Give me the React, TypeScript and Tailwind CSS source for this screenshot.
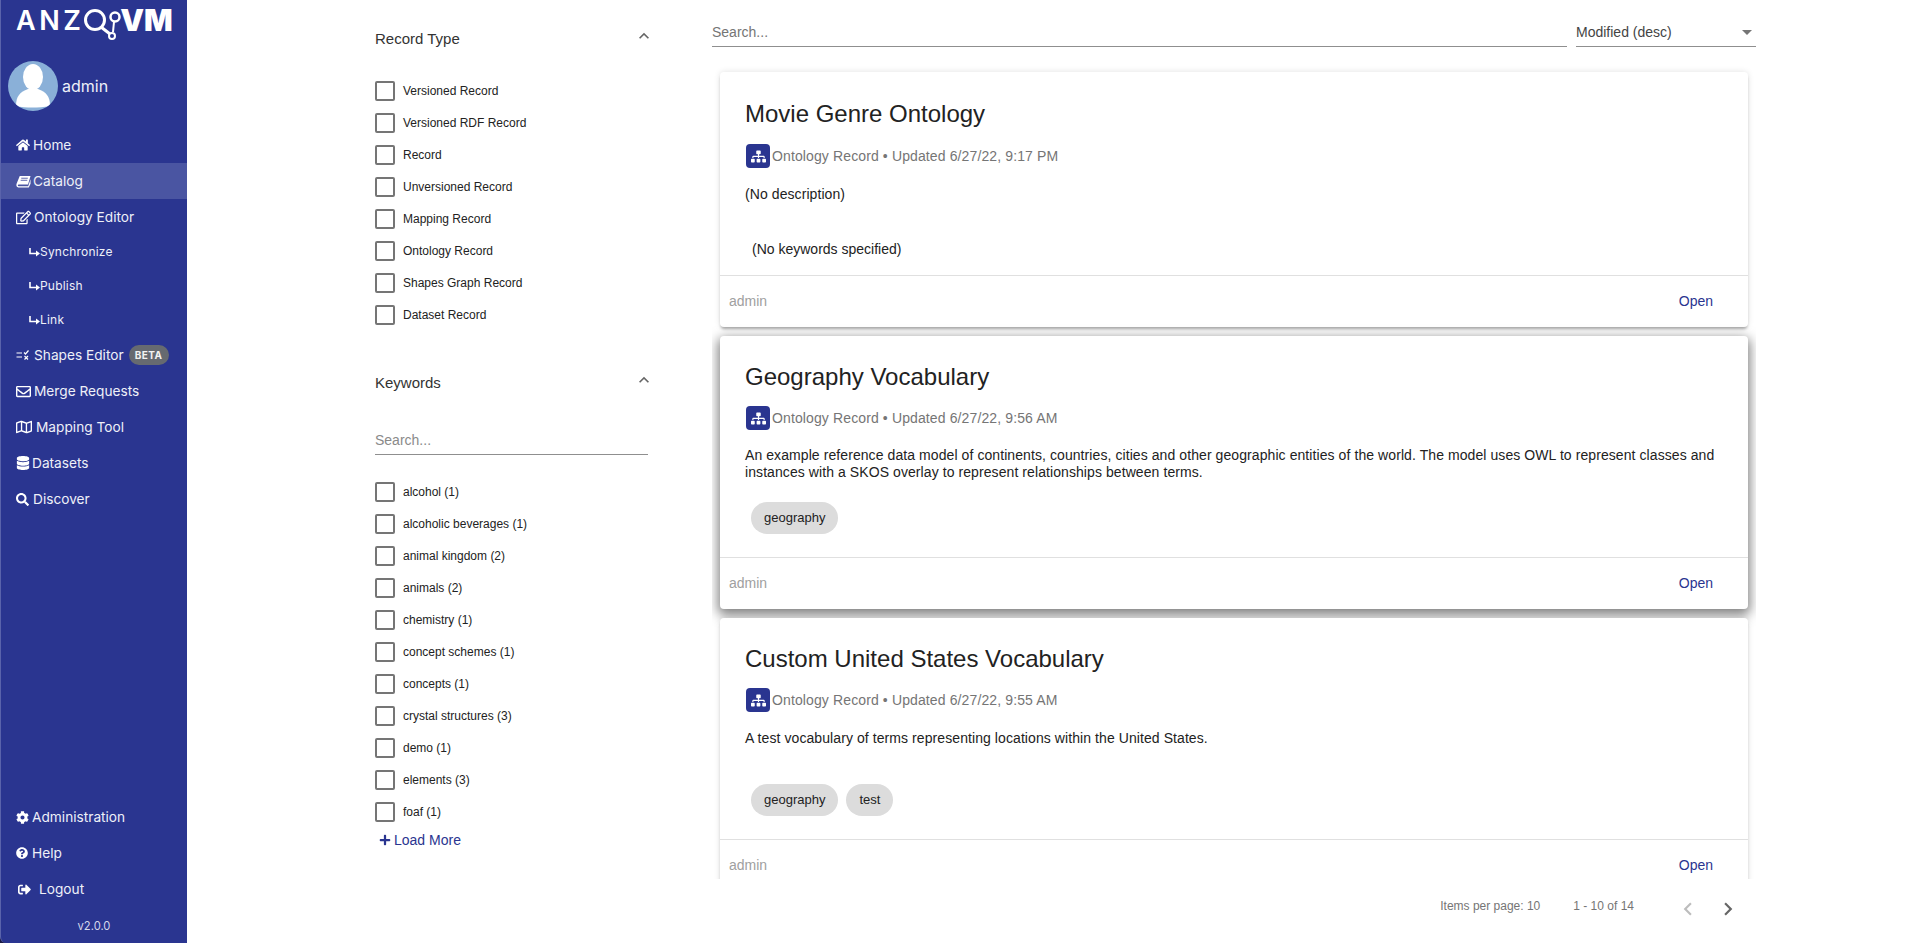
import { ReactNode } from 'react';
import {
  FaCog,
  FaDatabase,
  FaHome,
  FaPlus,
  FaQuestionCircle,
  FaRegEdit,
  FaRegEnvelope,
  FaRegMap,
  FaSearch,
  FaSignOutAlt,
  FaSitemap,
} from 'react-icons/fa';
import { MdChevronLeft, MdChevronRight, MdExpandLess } from 'react-icons/md';

const recordTypes = [
  'Versioned Record',
  'Versioned RDF Record',
  'Record',
  'Unversioned Record',
  'Mapping Record',
  'Ontology Record',
  'Shapes Graph Record',
  'Dataset Record',
];

const keywords = [
  'alcohol (1)',
  'alcoholic beverages (1)',
  'animal kingdom (2)',
  'animals (2)',
  'chemistry (1)',
  'concept schemes (1)',
  'concepts (1)',
  'crystal structures (3)',
  'demo (1)',
  'elements (3)',
  'foaf (1)',
];

function Logo() {
  return (
    <div className="flex h-[40px] items-start pl-[15px] pt-[2px] text-white">
      <span className="mt-[3px] text-[27px] leading-[32px] font-semibold tracking-[3.5px]">ANZ</span>
      <svg width="50" height="34" viewBox="0 0 50 34" className="mt-[4px] -ml-[1px] shrink-0">
        <g fill="none" stroke="white">
          <circle cx="12" cy="14" r="9.5" strokeWidth="3" />
          <path d="M18 21 L27 28" strokeWidth="3" />
          <circle cx="29" cy="30" r="3" strokeWidth="2" />
          <circle cx="32" cy="11" r="4.5" strokeWidth="2.5" />
          <path d="M31 16 L30 26" strokeWidth="2" />
        </g>
      </svg>
      <span className="-ml-[13px] text-[30px] leading-[36px] font-black">VM</span>
    </div>
  );
}

function Avatar() {
  return (
    <svg width="50" height="50" viewBox="0 0 50 50" className="shrink-0">
      <defs>
        <clipPath id="avatar-clip">
          <circle cx="25" cy="25" r="25" />
        </clipPath>
      </defs>
      <circle cx="25" cy="25" r="25" fill="#8ab0d8" />
      <g clipPath="url(#avatar-clip)" fill="white">
        <ellipse cx="25" cy="16" rx="10" ry="13" />
        <path d="M8 45 C8 35 12 31 20 28 L30 28 C38 31 42 35 42 45 C30 47 18 47 8 45 Z" />
      </g>
    </svg>
  );
}

function BookIcon() {
  return (
    <svg width="15" height="13" viewBox="0 0 16 13">
      <path
        d="M4 0.5 H15.5 L12.8 9.6 H3 C1.6 9.6 1.6 11.6 3 11.6 H13 L15.5 4 V9 L13.6 12.8 H2.6 C0.6 12.8 0 11 0.6 9 Z"
        fill="white"
      />
      <path d="M5.6 3 H12.6 M5 5.2 H12" stroke="#2a3590" strokeWidth="0.8" />
    </svg>
  );
}

function SubArrow() {
  return (
    <svg width="11" height="9" viewBox="0 0 11 9" className="shrink-0">
      <path d="M1 0 V5.5 H8" fill="none" stroke="white" strokeWidth="1.6" />
      <path d="M7 2.5 L11 5.5 L7 8.5 Z" fill="white" />
    </svg>
  );
}

function ShapesIcon() {
  return (
    <svg width="13" height="10" viewBox="0 0 13 10" className="shrink-0">
      <path d="M0.5 3 H6 M0.5 7 H6" stroke="white" strokeWidth="1.2" />
      <path d="M8 2.5 L9.5 4 L12.5 0.5 M8.5 6 L12 9.5 M12 6 L8.5 9.5" fill="none" stroke="white" strokeWidth="1.2" />
    </svg>
  );
}

function NavItem({ icon, label, slot, active, children }: {
  icon: ReactNode;
  label: string;
  slot: string;
  active?: boolean;
  children?: ReactNode;
}) {
  return (
    <div className={`flex h-[36px] items-center pl-[15px] ${active ? 'bg-[#4a55a2]' : ''}`}>
      <span className={`flex shrink-0 items-center text-white ${slot}`}>{icon}</span>
      <span className="text-[13.7px] text-[#eef0f8]">{label}</span>
      {children}
    </div>
  );
}

function SubItem({ label }: { label: string }) {
  return (
    <div className="flex h-[34px] items-center pl-[28px]">
      <SubArrow />
      <span className="text-[12px] tracking-[0.2px] text-[#eef0f8]">{label}</span>
    </div>
  );
}

function Sidebar() {
  return (
    <div className="h-full w-[187px] shrink-0 bg-[#1b1a45]">
      <aside className="flex h-full flex-col rounded-bl-[6px] border-l border-[#5a63ab] bg-[#2a3590] font-['Inter',sans-serif]">
        <Logo />
        <div className="mt-[21px] flex items-center gap-[4px] pl-[7px]">
          <Avatar />
          <span className="text-[16px] text-[#eef0f8]">admin</span>
        </div>
        <nav className="mt-[16px] flex flex-col">
          <NavItem icon={<FaHome size={14} />} label="Home" slot="w-[17px]" />
          <NavItem icon={<BookIcon />} label="Catalog" slot="w-[17px]" active />
          <NavItem icon={<FaRegEdit size={15} />} label="Ontology Editor" slot="w-[18px]" />
          <SubItem label="Synchronize" />
          <SubItem label="Publish" />
          <SubItem label="Link" />
          <NavItem icon={<ShapesIcon />} label="Shapes Editor" slot="w-[18px]">
            <span className="ml-[5px] rounded-full bg-[#666a70] px-[6px] py-[3px] text-[10px] leading-[14px] font-bold tracking-[0.5px] text-[#f2f2f2]">
              BETA
            </span>
          </NavItem>
          <NavItem icon={<FaRegEnvelope size={15} />} label="Merge Requests" slot="w-[18px]" />
          <NavItem icon={<FaRegMap size={16} />} label="Mapping Tool" slot="w-[20px]" />
          <NavItem icon={<FaDatabase size={14} />} label="Datasets" slot="w-[16px]" />
          <NavItem icon={<FaSearch size={13} />} label="Discover" slot="w-[17px]" />
        </nav>
        <div className="mt-auto flex flex-col">
          <NavItem icon={<FaCog size={13} />} label="Administration" slot="w-[16px]" />
          <NavItem icon={<FaQuestionCircle size={12} />} label="Help" slot="w-[16px]" />
          <NavItem icon={<FaSignOutAlt size={13} className="ml-[2px]" />} label="Logout" slot="w-[23px]" />
          <div className="flex h-[36px] items-center justify-center pt-[2px] text-[11.2px] text-[#d5d8ec]">v2.0.0</div>
        </div>
      </aside>
    </div>
  );
}

function CheckRow({ label }: { label: string }) {
  return (
    <div className="flex h-[32px] items-center gap-[8px]">
      <span className="h-[20px] w-[20px] shrink-0 rounded-[2px] border-2 border-[#757575]" />
      <span className="text-[12px] text-[#222]">{label}</span>
    </div>
  );
}

function FilterHeader({ title }: { title: string }) {
  return (
    <div className="flex h-[24px] items-center justify-between">
      <span className="text-[15px] text-[#333]">{title}</span>
      <MdExpandLess size={20} className="-mr-[6px] -mt-[6px] text-[#666]" />
    </div>
  );
}

function Filters() {
  return (
    <div className="w-[273px] shrink-0 pt-[27px]">
      <FilterHeader title="Record Type" />
      <div className="mt-[24px] flex flex-col">
        {recordTypes.map((t) => (
          <CheckRow key={t} label={t} />
        ))}
      </div>
      <div className="mt-[40px]">
        <FilterHeader title="Keywords" />
      </div>
      <div className="mt-[35px] border-b border-[#8f8f8f] pb-[4px] text-[14px] leading-[20px] text-[#8a8a8a]">Search...</div>
      <div className="mt-[21px] flex flex-col">
        {keywords.map((k) => (
          <CheckRow key={k} label={k} />
        ))}
      </div>
      <div className="flex items-center gap-[3px] pl-[4px] pt-[2px] text-[14px] leading-[20px] text-[#2a3590]">
        <FaPlus size={12} />
        <span>Load More</span>
      </div>
    </div>
  );
}

function RecordCard({ title, updated, description, tags, descClass, compact, hovered }: {
  title: string;
  updated: string;
  description: string;
  tags: string[];
  descClass: string;
  compact?: boolean;
  hovered?: boolean;
}) {
  return (
    <div
      className={`shrink-0 rounded-[4px] bg-white ${
        hovered
          ? 'shadow-[0_4px_12px_2px_rgba(0,0,0,0.5)]'
          : 'shadow-[0_3px_3px_-1px_rgba(0,0,0,0.3),0_0_6px_rgba(0,0,0,0.12)]'
      }`}
    >
      <div className={`px-[25px] ${compact ? 'pt-[25px]' : 'pt-[26px]'}`}>
        <h2 className="text-[24px] leading-[32px] text-[#222]">{title}</h2>
        <div className={`flex h-[24px] items-center pl-[1px] ${compact ? 'mt-[13px]' : 'mt-[14px]'}`}>
          <span className="flex h-[24px] w-[24px] shrink-0 items-center justify-center rounded-[4px] bg-[#2a3590] text-white">
            <FaSitemap size={15} />
          </span>
          <span className="ml-[2px] text-[14px] tracking-[0.12px] text-[#757575]">
            Ontology Record • Updated {updated}
          </span>
        </div>
        <p className={`text-[14px] leading-[17px] tracking-[0.08px] text-[#222] ${descClass}`}>{description}</p>
      </div>
      {tags.length === 0 ? (
        <div className="pl-[32px] pt-[20px] pb-[16px] text-[14px] leading-[20px] text-[#222]">(No keywords specified)</div>
      ) : (
        <div className="flex gap-[8px] pl-[31px] pt-[19px] pb-[23px]">
          {tags.map((t) => (
            <span key={t} className="flex h-[32px] items-center rounded-full bg-[#dcdcdc] px-[13px] text-[13px] text-[#222]">
              {t}
            </span>
          ))}
        </div>
      )}
      <div className="flex h-[52px] items-center justify-between border-t border-[#e0e0e0] pb-[1px] pl-[9px] pr-[35px] text-[14px]">
        <span className="text-[#a0a0a0]">admin</span>
        <span className="text-[#2a3590]">Open</span>
      </div>
    </div>
  );
}

function Results() {
  return (
    <div className="flex h-full w-[1044px] shrink-0 flex-col">
      <div className="flex gap-[9px] pt-[16px]">
        <div className="h-[31px] flex-1 border-b border-[#8f8f8f] pt-[1px] text-[14px] leading-[30px] text-[#757575]">Search...</div>
        <div className="flex h-[31px] w-[180px] items-center justify-between border-b border-[#8f8f8f] pt-[2px] pr-[4px] text-[14px] text-[#444]">
          <span>Modified (desc)</span>
          <span className="h-0 w-0 border-x-[5px] border-t-[5px] border-x-transparent border-t-[#757575]" />
        </div>
      </div>
      <div className="mt-[19px] flex h-[813px] flex-col gap-[9px] overflow-hidden px-[8px] pt-[6px]">
        <RecordCard
          title="Movie Genre Ontology"
          updated="6/27/22, 9:17 PM"
          description="(No description)"
          tags={[]}
          descClass="mt-[18px] h-[33px]"
        />
        <RecordCard
          title="Geography Vocabulary"
          updated="6/27/22, 9:56 AM"
          description="An example reference data model of continents, countries, cities and other geographic entities of the world. The model uses OWL to represent classes and instances with a SKOS overlay to represent relationships between terms."
          tags={['geography']}
          descClass="mt-[17px] h-[36px]"
          compact
          hovered
        />
        <RecordCard
          title="Custom United States Vocabulary"
          updated="6/27/22, 9:55 AM"
          description="A test vocabulary of terms representing locations within the United States."
          tags={['geography', 'test']}
          descClass="mt-[18px] h-[35px]"
          compact
        />
      </div>
      <div className="flex flex-1 items-center justify-end pb-[10px] pr-[15px] text-[12px] text-[#757575]">
        <span>Items per page: 10</span>
        <span className="ml-[33px]">1 - 10 of 14</span>
        <MdChevronLeft size={26} className="ml-[41px] mt-[5px] text-[#bdbdbd]" />
        <MdChevronRight size={26} className="ml-[14px] mt-[5px] text-[#666]" />
      </div>
    </div>
  );
}

export default function App() {
  return (
    <div className="flex h-[943px] w-full overflow-hidden bg-white font-['Liberation_Sans',Arial,sans-serif]">
      <Sidebar />
      <div className="ml-[188px] flex h-full">
        <Filters />
        <div className="w-[64px] shrink-0" />
        <Results />
      </div>
    </div>
  );
}
